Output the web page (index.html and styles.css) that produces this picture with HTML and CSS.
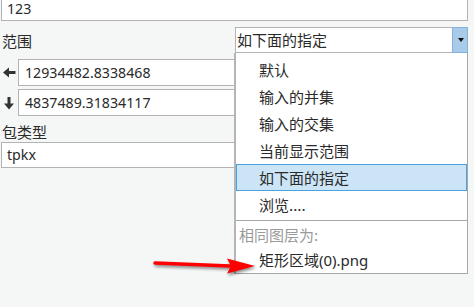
FILE: index.html
```html
<!DOCTYPE html>
<html lang="zh-CN">
<head>
<meta charset="utf-8">
<title>范围</title>
<link rel="stylesheet" href="styles.css">
</head>
<body>
<div class="form">
  <div class="field top-field"><span class="value">123</span></div>

  <div class="range-row">
    <span class="label">范围</span>
    <div class="combo">
      <span class="combo-text">如下面的指定</span>
      <span class="combo-btn"><span class="tri"></span></span>
      <ul class="list">
        <li class="item">默认</li>
        <li class="item">输入的并集</li>
        <li class="item">输入的交集</li>
        <li class="item">当前显示范围</li>
        <li class="item selected">如下面的指定</li>
        <li class="item">浏览....</li>
        <li class="sep"></li>
        <li class="header">相同图层为:</li>
        <li class="item last">矩形区域(0).png</li>
      </ul>
    </div>
  </div>

  <div class="coords">
    <div class="coord-row">
      <svg class="dir-icon" width="17" height="27" viewBox="0 0 17 27">
        <polygon points="2,13.5 8,8.5 8,18.5" fill="#333"/>
        <rect x="7.5" y="12" width="7" height="3" fill="#333"/>
      </svg>
      <div class="field coord-field"><span class="value">12934482.8338468</span></div>
    </div>
    <div class="coord-row">
      <svg class="dir-icon" width="17" height="27" viewBox="0 0 17 27">
        <rect x="6.5" y="8" width="3" height="7" fill="#333"/>
        <polygon points="3,14.5 13,14.5 8,20.5" fill="#333"/>
      </svg>
      <div class="field coord-field"><span class="value">4837489.31834117</span></div>
    </div>
  </div>

  <div class="label label-block">包类型</div>
  <div class="field pkg-field"><span class="value">tpkx</span></div>
</div>

<svg class="annot-arrow" width="110" height="30" viewBox="0 0 110 30">
  <line x1="5" y1="11" x2="80" y2="14" stroke="#f00" stroke-width="3.5" stroke-linecap="round"/>
  <polygon points="77,6.5 105,14 77,21.5 81,14" fill="#f00"/>
</svg>
</body>
</html>
```

FILE: styles.css
```css
* { box-sizing: border-box; }

html, body {
  margin: 0;
  padding: 0;
}

body {
  width: 474px;
  height: 307px;
  overflow: hidden;
  background: #f5f6f6;
  font-family: "Noto Sans", "Noto Sans CJK SC", sans-serif;
  font-size: 15px;
  color: #2a2a2a;
  position: relative;
}

.form {
  padding: 0 6px 0 1px;
}

.field {
  background: #fff;
  border: 1px solid #b3b3b3;
  display: flex;
  align-items: center;
  padding-left: 5px;
  line-height: 20px;
}

.value {
  font-size: 14.2px;
}

.top-field {
  height: 21px;
  border-top: none;
  padding-bottom: 2px;
}

.range-row {
  margin-top: 6px;
  height: 26px;
  display: flex;
  align-items: center;
  justify-content: space-between;
}

.label {
  padding-left: 1px;
  font-family: "Noto Sans CJK SC", sans-serif;
  color: #2a2a2a;
}

.combo {
  position: relative;
  width: 233px;
  height: 26px;
  border: 1px solid #b3b3b3;
  background: #fff;
  display: flex;
  align-items: center;
}

.combo-text {
  flex: 1;
  padding-left: 1px;
  font-family: "Noto Sans CJK SC", sans-serif;
  line-height: 20px;
}

.combo-btn {
  align-self: stretch;
  width: 16px;
  margin: -1px -1px -1px 0;
  background: #a9cbe8;
  border: 1px solid #80b3e0;
  display: flex;
  align-items: center;
  justify-content: center;
}

.tri {
  width: 0;
  height: 0;
  border-left: 3.5px solid transparent;
  border-right: 3.5px solid transparent;
  border-top: 4px solid #111;
  margin-left: 1px;
}

.list {
  position: absolute;
  top: 25px;
  left: -2px;
  right: -1px;
  height: 221px;
  margin: 0;
  padding: 3px 0 0;
  list-style: none;
  background: #fff;
  border: 1px solid #a7a7a7;
  border-top: none;
  border-left: 2px solid #b5b5b5;
  font-family: "Noto Sans CJK SC", sans-serif;
  z-index: 2;
}

.item {
  height: 27px;
  line-height: 27px;
  padding-left: 23px;
  color: #2a2a2a;
}

.item.selected {
  background: #cce5f6;
  border: 1px solid #4aa3e0;
  padding-left: 22px;
  line-height: 25px;
}

.item.last {
  height: 25px;
  line-height: 25px;
  font-family: "Noto Sans", "Noto Sans CJK SC", sans-serif;
}

.sep {
  margin-top: 2px;
  height: 1px;
  background: #a7a7a7;
}

.header {
  height: 27px;
  line-height: 27px;
  padding-left: 3px;
  color: #9a9a9a;
}

.coords {
  margin-top: 6px;
  display: flex;
  flex-direction: column;
  gap: 3px;
}

.coord-row {
  display: flex;
  align-items: center;
}

.dir-icon {
  flex: none;
  display: block;
}

.coord-field {
  flex: 1;
  height: 27px;
  padding-left: 6px;
}

.label-block {
  height: 26px;
  padding-top: 5px;
  line-height: 21px;
}

.pkg-field {
  height: 26px;
}

.annot-arrow {
  position: absolute;
  left: 150px;
  top: 252px;
  filter: drop-shadow(1px 2px 1.5px rgba(0, 0, 0, 0.45));
  z-index: 3;
}
```
